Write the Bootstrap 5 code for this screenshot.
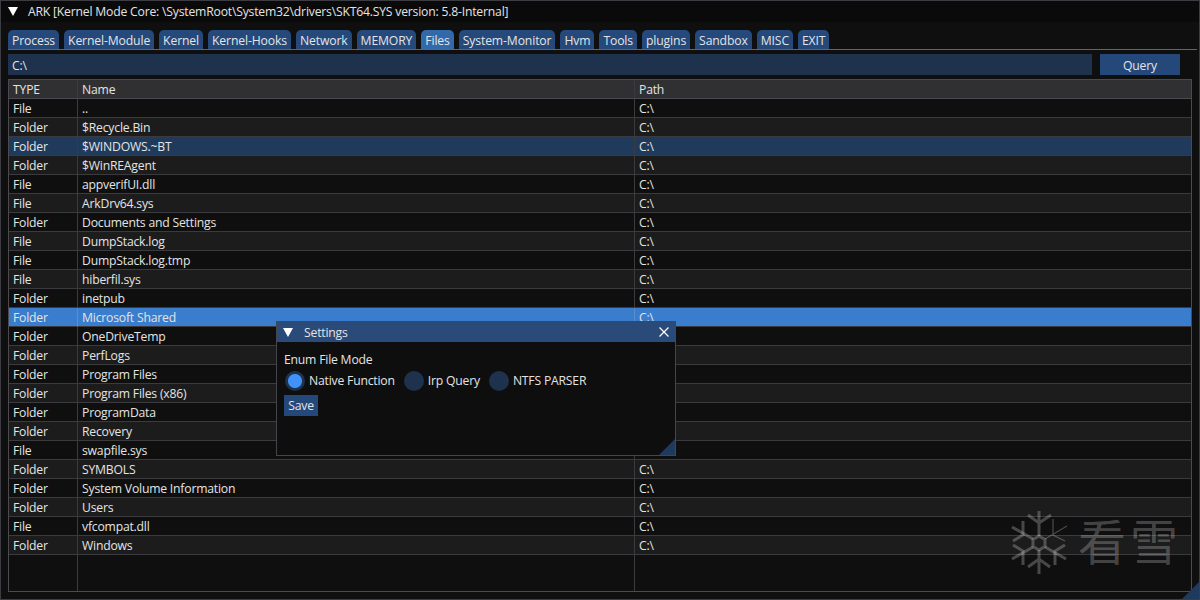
<!DOCTYPE html>
<html lang="en">
<head>
  <meta charset="UTF-8" />
  <title>ARK</title>
  <meta name="viewport" content="width=device-width, initial-scale=1.0">
  <link href="https://cdn.jsdelivr.net/npm/bootstrap@5.3.0/dist/css/bootstrap.min.css" rel="stylesheet">
  <style>
    html, body { height: 100%; }
    body {
      background-color: #0f0f0f;
      color: #e4e4e4;
      font-family: "Open Sans", "Liberation Sans", sans-serif;
      font-size: 12.2px;
      letter-spacing: -0.2px;
      line-height: 18px;
      overflow: hidden;
    }
    .ark-window { height: 600px; border: 1px solid #3c3c42; position: relative; }
    .ark-title { height: 21px; background-color: #0a0a0a; padding-left: 7px; }
    .ark-arrow { width: 0; height: 0; border-left: 5px solid transparent; border-right: 5px solid transparent; border-top: 9px solid #fff; }
    .ark-title-text { margin-left: 10px; }
    .ark-body { padding: 8px 2px 0 7px; }
    .ark-tabs { border-bottom: 1px solid #3a6ea5; gap: 5px; height: 20px; flex-wrap: nowrap; }
    .ark-tabs .nav-link {
      height: 19px;
      padding: 2px 4px 0;
      color: #e4e4e4;
      background-color: #24497a;
      border: 0;
      border-radius: 5px 5px 0 0;
      white-space: nowrap;
      font-size: inherit;
      letter-spacing: -0.13px;
      line-height: 17px;
    }
    .ark-tabs .nav-link.active { background-color: #3169ab; color: #e4e4e4; }
    .ark-query { margin-top: 4px; margin-bottom: 4px; height: 21px; }
    .ark-input {
      width: 1084px;
      height: 21px;
      padding: 1px 4px 0;
      background-color: #1e314d;
      color: #e4e4e4;
      border: 0;
      border-radius: 0;
      font-size: inherit;
      letter-spacing: inherit;
      flex: none;
    }
    .ark-btn {
      background-color: #24487a;
      color: #e4e4e4;
      border: 0;
      border-radius: 0;
      font-size: inherit;
      letter-spacing: inherit;
      line-height: 18px;
    }
    .ark-btn-query { width: 80px; height: 21px; margin-left: 8px; padding: 3px 0 0; flex: none; }
    .ark-table-wrap { width: 1184px; height: 513px; border: 1px solid #4a4a50; position: relative; }
    .ark-table { table-layout: fixed; width: 1182px; margin: 0; border-collapse: separate; border-spacing: 0; --bs-table-bg: transparent; --bs-table-color: #e4e4e4; color: #e4e4e4; }
    .ark-table th, .ark-table td {
      height: 19px;
      padding: 1px 4px 0;
      font-weight: 400;
      line-height: 17px;
      font-size: inherit;
      color: #e4e4e4;
      background-color: transparent;
      border-width: 0 1px 1px 0;
      border-style: solid;
      border-color: #3a3a3f;
      box-shadow: none;
      white-space: nowrap;
    }
    .ark-table th { background-color: #303032; border-bottom-color: #4a4a50; }
    .ark-table th:last-child, .ark-table td:last-child { border-right: 0; }
    .ark-table tbody tr:nth-child(even) td { background-color: #1c1c1c; }
    .ark-table tbody tr.ark-sel td { background-color: #1f3a5a; }
    .ark-table tbody tr.ark-hot td { background-color: #3a7dcc; border-color: #3a7dcc #5a8fcc #3a3a3f #3a7dcc; }
    .ark-col-fill { position: absolute; top: 0; bottom: 0; width: 1px; background-color: #3a3a3f; }
    .ark-fill-a { left: 68px; }
    .ark-fill-b { left: 625px; }
    .ark-settings {
      position: absolute;
      left: 275px;
      top: 320px;
      width: 400px;
      height: 135px;
      background-color: #0e0e0e;
      border: 1px solid #45454c;
      z-index: 3;
    }
    .ark-settings-title { height: 20px; background-color: #2a4a7a; padding: 0 6px; }
    .ark-settings-name { margin-left: 11px; padding-top: 1px; }
    .ark-settings-body { padding: 9px 7px 0; }
    .ark-radio { width: 20px; height: 20px; margin: 0 4px 0 1px; background-color: #1e314d; background-image: none; border: 0; flex: none; float: none; opacity: 1; }
    .ark-radio:checked { background-color: #1e314d; background-image: radial-gradient(circle, #3f92f7 0 6.5px, transparent 7.5px); }
    .ark-radio-row { margin-top: 1px; height: 22px; }
    .ark-radio-item { margin-right: 8px; }
    .ark-btn-save { height: 21px; width: 34px; padding: 0; display: block; margin-top: 3px; }
    .ark-grip { position: absolute; right: 0; bottom: 0; width: 0; height: 0; border-left: 16px solid transparent; border-bottom: 16px solid #1e3a5f; }
    .ark-grip-main { border-left-width: 17px; border-bottom-width: 17px; }
    .ark-mark {
      position: absolute;
      left: 1004px;
      top: 504px;
      height: 75px;
      z-index: 2;
      color: rgba(255, 255, 255, 0.24);
      pointer-events: none;
    }
    .ark-mark-text { font-family: "Noto Sans CJK SC", sans-serif; font-size: 48px; line-height: 75px; margin-left: 3px; letter-spacing: 4px; margin-top: -6px; }
  </style>
</head>
<body>
  <div class="ark-window">
    <div class="ark-title d-flex align-items-center">
      <span class="ark-arrow"></span>
      <span class="ark-title-text">ARK [Kernel Mode Core: \SystemRoot\System32\drivers\SKT64.SYS version: 5.8-Internal]</span>
    </div>

    <div class="ark-body">
      <ul class="nav ark-tabs">
        <li class="nav-item"><a class="nav-link" href="#">Process</a></li>
        <li class="nav-item"><a class="nav-link" href="#">Kernel-Module</a></li>
        <li class="nav-item"><a class="nav-link" href="#">Kernel</a></li>
        <li class="nav-item"><a class="nav-link" href="#">Kernel-Hooks</a></li>
        <li class="nav-item"><a class="nav-link" href="#">Network</a></li>
        <li class="nav-item"><a class="nav-link" href="#">MEMORY</a></li>
        <li class="nav-item"><a class="nav-link active" href="#">Files</a></li>
        <li class="nav-item"><a class="nav-link" href="#">System-Monitor</a></li>
        <li class="nav-item"><a class="nav-link" href="#">Hvm</a></li>
        <li class="nav-item"><a class="nav-link" href="#">Tools</a></li>
        <li class="nav-item"><a class="nav-link" href="#">plugins</a></li>
        <li class="nav-item"><a class="nav-link" href="#">Sandbox</a></li>
        <li class="nav-item"><a class="nav-link" href="#">MISC</a></li>
        <li class="nav-item"><a class="nav-link" href="#">EXIT</a></li>
      </ul>

      <div class="ark-query d-flex">
        <input class="form-control ark-input" type="text" value="C:\">
        <button class="btn ark-btn ark-btn-query" type="button">Query</button>
      </div>

      <div class="ark-table-wrap">
        <div class="ark-col-fill ark-fill-a"></div>
        <div class="ark-col-fill ark-fill-b"></div>
        <table class="table ark-table position-relative">
          <colgroup><col style="width:69px"><col style="width:557px"><col></colgroup>
          <thead>
            <tr><th>TYPE</th><th>Name</th><th>Path</th></tr>
          </thead>
          <tbody>
            <tr><td>File</td><td>..</td><td>C:\</td></tr>
            <tr><td>Folder</td><td>$Recycle.Bin</td><td>C:\</td></tr>
            <tr class="ark-sel"><td>Folder</td><td>$WINDOWS.~BT</td><td>C:\</td></tr>
            <tr><td>Folder</td><td>$WinREAgent</td><td>C:\</td></tr>
            <tr><td>File</td><td>appverifUI.dll</td><td>C:\</td></tr>
            <tr><td>File</td><td>ArkDrv64.sys</td><td>C:\</td></tr>
            <tr><td>Folder</td><td>Documents and Settings</td><td>C:\</td></tr>
            <tr><td>File</td><td>DumpStack.log</td><td>C:\</td></tr>
            <tr><td>File</td><td>DumpStack.log.tmp</td><td>C:\</td></tr>
            <tr><td>File</td><td>hiberfil.sys</td><td>C:\</td></tr>
            <tr><td>Folder</td><td>inetpub</td><td>C:\</td></tr>
            <tr class="ark-hot"><td>Folder</td><td>Microsoft Shared</td><td>C:\</td></tr>
            <tr><td>Folder</td><td>OneDriveTemp</td><td>C:\</td></tr>
            <tr><td>Folder</td><td>PerfLogs</td><td>C:\</td></tr>
            <tr><td>Folder</td><td>Program Files</td><td>C:\</td></tr>
            <tr><td>Folder</td><td>Program Files (x86)</td><td>C:\</td></tr>
            <tr><td>Folder</td><td>ProgramData</td><td>C:\</td></tr>
            <tr><td>Folder</td><td>Recovery</td><td>C:\</td></tr>
            <tr><td>File</td><td>swapfile.sys</td><td>C:\</td></tr>
            <tr><td>Folder</td><td>SYMBOLS</td><td>C:\</td></tr>
            <tr><td>Folder</td><td>System Volume Information</td><td>C:\</td></tr>
            <tr><td>Folder</td><td>Users</td><td>C:\</td></tr>
            <tr><td>File</td><td>vfcompat.dll</td><td>C:\</td></tr>
            <tr><td>Folder</td><td>Windows</td><td>C:\</td></tr>
          </tbody>
        </table>
      </div>
    </div>

    <div class="ark-mark d-flex align-items-center">
      <svg width="70" height="75" viewBox="0 0 70 75" fill="none" stroke="currentColor" stroke-width="3">
        <path d="M34 6V31M34 45V69M23 10L34 18L46 10M23 62L34 54L45 62"/>
        <path d="M7 22L28 34M7 54L28 42M61 54L40 42"/>
        <path d="M18 16V30L8 36M18 60V46L8 40M50 60V46L60 40"/>
        <path d="M34 31L40 34.5V41.5L34 45L28 41.5V34.5Z"/>
        <path d="M62 21L40 34M48 14V30L60 36" stroke-width="1.3"/>
      </svg>
      <span class="ark-mark-text">看雪</span>
    </div>

    <div class="ark-settings">
      <div class="ark-settings-title d-flex align-items-center">
        <span class="ark-arrow"></span>
        <span class="ark-settings-name flex-grow-1">Settings</span>
        <svg width="10" height="10" viewBox="0 0 10 10" stroke="#fff" stroke-width="1.2"><path d="M0.5 0.5L9.5 9.5M9.5 0.5L0.5 9.5"/></svg>
      </div>
      <div class="ark-settings-body">
        <div>Enum File Mode</div>
        <div class="ark-radio-row d-flex align-items-center">
          <label class="ark-radio-item d-flex align-items-center"><input class="form-check-input ark-radio" type="radio" name="mode" checked>Native Function</label>
          <label class="ark-radio-item d-flex align-items-center"><input class="form-check-input ark-radio" type="radio" name="mode">Irp Query</label>
          <label class="ark-radio-item d-flex align-items-center"><input class="form-check-input ark-radio" type="radio" name="mode">NTFS PARSER</label>
        </div>
        <button class="btn ark-btn ark-btn-save" type="button">Save</button>
      </div>
      <div class="ark-grip"></div>
    </div>

    <div class="ark-grip ark-grip-main"></div>
  </div>

  <script src="https://cdn.jsdelivr.net/npm/bootstrap@5.3.0/dist/js/bootstrap.bundle.min.js"></script>
</body>
</html>
